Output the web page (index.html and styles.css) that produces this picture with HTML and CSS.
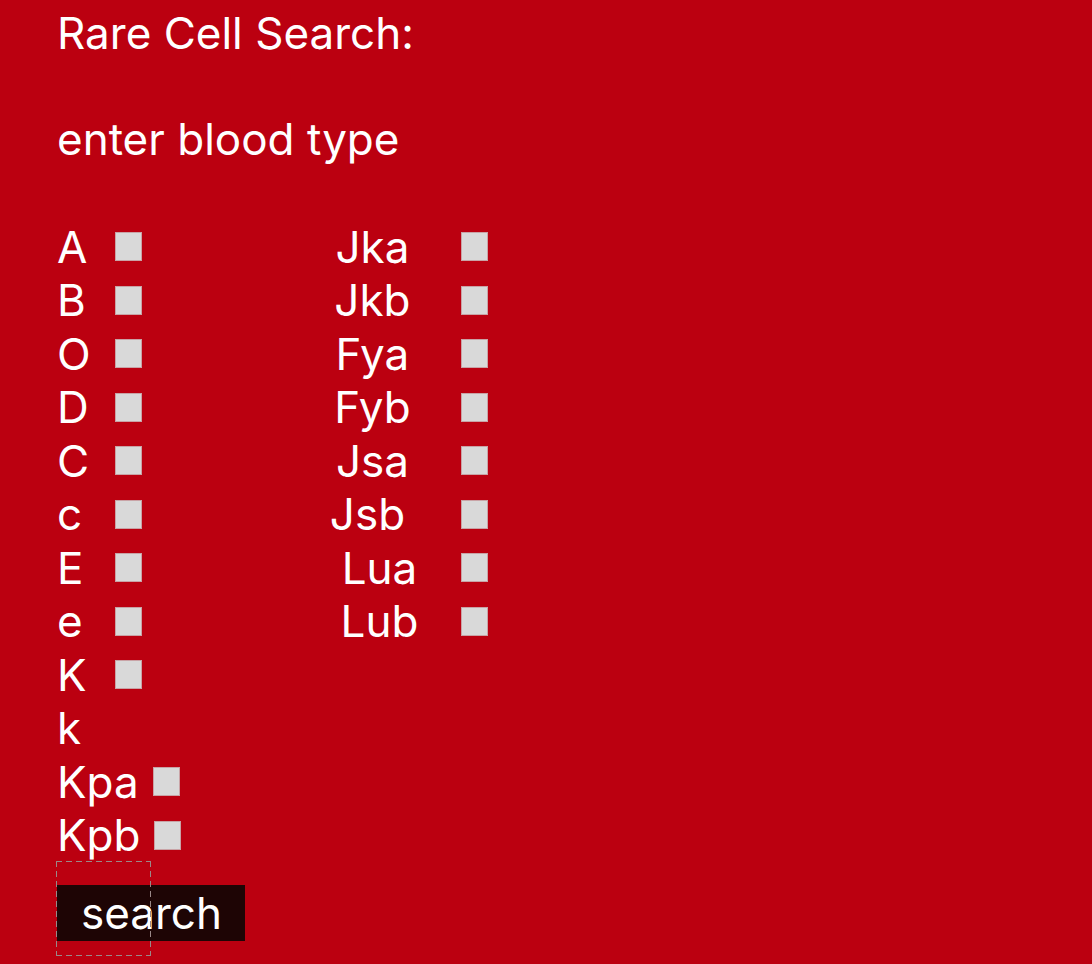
FILE: index.html
```html
<!DOCTYPE html>
<html lang="en">
<head>
    <meta charset="UTF-8">
    <title>Rare Cell Search</title>
    <link rel="stylesheet" href="styles.css">
</head>
<body>
    <div class="page">
        <h1 class="title">Rare Cell Search:</h1>
        <p class="prompt">enter blood type</p>

        <!-- antigen checkboxes -->
        <div class="antigens">
            <div class="col col-left">
                <label class="row"><span class="name">A</span><span class="box"></span></label>
                <label class="row"><span class="name">B</span><span class="box"></span></label>
                <label class="row"><span class="name">O</span><span class="box"></span></label>
                <label class="row"><span class="name">D</span><span class="box"></span></label>
                <label class="row"><span class="name">C</span><span class="box"></span></label>
                <label class="row"><span class="name">c</span><span class="box"></span></label>
                <label class="row"><span class="name">E</span><span class="box"></span></label>
                <label class="row"><span class="name">e</span><span class="box"></span></label>
                <label class="row"><span class="name">K</span><span class="box"></span></label>
                <label class="row"><span class="name">k</span></label>
                <label class="row"><span class="name">Kpa</span><span class="box"></span></label>
                <label class="row"><span class="name">Kpb</span><span class="box"></span></label>
            </div>
            <div class="col col-right">
                <label class="row"><span class="name">Jka</span><span class="box"></span></label>
                <label class="row"><span class="name">Jkb</span><span class="box"></span></label>
                <label class="row"><span class="name">Fya</span><span class="box"></span></label>
                <label class="row"><span class="name">Fyb</span><span class="box"></span></label>
                <label class="row"><span class="name">Jsa</span><span class="box"></span></label>
                <label class="row"><span class="name shift-left">Jsb</span><span class="box"></span></label>
                <label class="row"><span class="name shift-right">Lua</span><span class="box"></span></label>
                <label class="row"><span class="name shift-right">Lub</span><span class="box"></span></label>
            </div>
        </div>

        <div class="search-wrap">
            <button class="search-btn">search</button>
            <div class="frame"></div>
        </div>
    </div>
</body>
</html>
```

FILE: styles.css
```css
body {
    margin: 0;
    padding: 0;
    background: #bb0010;
    font-family: Inter, "Noto Sans", sans-serif;
    color: #fff;
}

.page {
    padding: 7px 0 0 57px;
    min-height: 957px;
}

.title,
.prompt {
    margin: 0;
    font-size: 44px;
    font-weight: 400;
    line-height: 53px;
}

.prompt {
    margin-top: 53px;
}

.antigens {
    display: flex;
    margin-top: 54px;
}

.col {
    display: flex;
    flex-direction: column;
}

.row {
    display: flex;
    align-items: center;
    gap: 14px;
    height: 53.5px;
    font-size: 44px;
}

.col-left .name {
    min-width: 44px;
}

.col-right {
    margin-left: 141px;
}

.col-right .row {
    gap: 39px;
}

.col-right .name {
    width: 100px;
    text-align: center;
}

.col-right .shift-left {
    padding-right: 10px;
    width: 90px;
}

.col-right .shift-right {
    padding-left: 14px;
    width: 86px;
}

.box {
    width: 27px;
    height: 29px;
    background: #d9d9d9;
    box-sizing: border-box;
    border: 1px solid #c9a3a6;
}

.search-wrap {
    position: relative;
    margin-top: 23px;
    width: 188px;
}

.search-btn {
    display: block;
    width: 188px;
    height: 56px;
    padding: 0 0 0 24px;
    border: none;
    background: #1e0505;
    color: #fff;
    font-family: inherit;
    font-size: 44px;
    line-height: 56px;
    text-align: left;
}

.frame {
    position: absolute;
    left: -1px;
    top: -24px;
    width: 95px;
    height: 95px;
    background-image:
        repeating-linear-gradient(90deg, #9a8888 0 6px, transparent 6px 10px),
        repeating-linear-gradient(90deg, #9a8888 0 6px, transparent 6px 10px),
        repeating-linear-gradient(180deg, #9a8888 0 6px, transparent 6px 10px),
        repeating-linear-gradient(180deg, #9a8888 0 6px, transparent 6px 10px);
    background-size: 100% 1px, 100% 1px, 1px 100%, 1px 100%;
    background-position: 0 0, 0 100%, 0 0, 100% 0;
    background-repeat: no-repeat;
}
```
